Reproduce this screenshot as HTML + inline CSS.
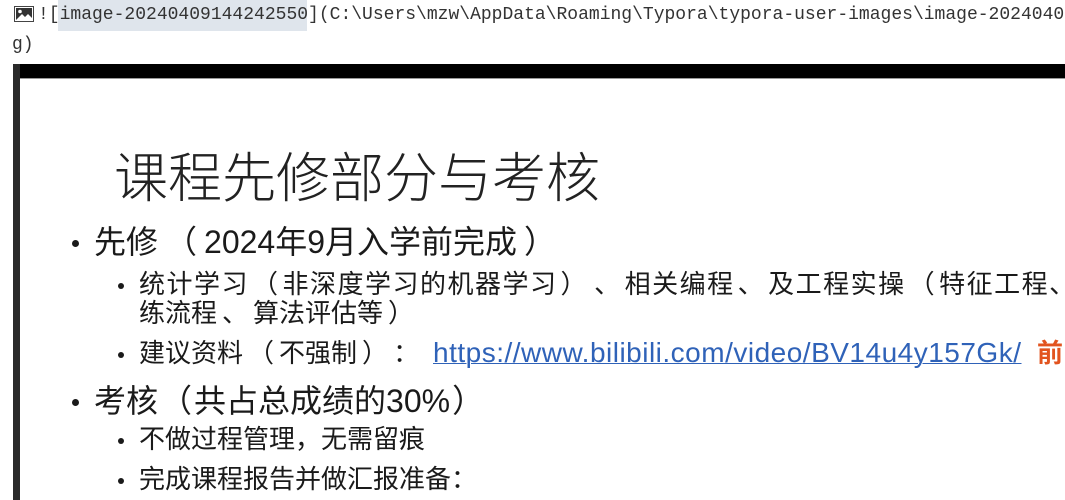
<!DOCTYPE html>
<html><head><meta charset="utf-8"><style>
html,body{margin:0;padding:0;width:1065px;height:500px;overflow:hidden;background:#fff;position:relative}
*{text-spacing-trim:space-all}
.mono{font-family:"Liberation Mono","DejaVu Sans Mono",monospace;font-size:18px;color:#333;position:absolute;white-space:nowrap;line-height:22px}
.s{position:absolute;white-space:nowrap;font-family:"Liberation Sans","Noto Sans CJK SC",sans-serif;color:#1a1a1a;line-height:1}
.b{position:absolute;width:7px;height:7px;border-radius:50%;background:#1a1a1a}
.b2{width:6px;height:6px}
.p{display:inline-block;margin:0 7px}
.r{display:inline-block;margin:0 3px}
.q{display:inline-block;margin:0 5px}
</style></head><body>
<div style="position:absolute;left:58px;top:0;width:249px;height:31px;background:#dfe5ec"></div>
<svg style="position:absolute;left:14px;top:6px" width="20" height="16" viewBox="0 0 20 16"><rect x="0.5" y="0.5" width="19" height="15" fill="#fff" stroke="#444"/><rect x="2" y="2" width="16" height="12" fill="#333"/><circle cx="6" cy="5.5" r="1.8" fill="#fff"/><path d="M2 14 L8 8 L11 11 L14 8 L18 12 L18 14Z" fill="#fff"/></svg>
<div class="mono" style="left:38px;top:4px">![image-20240409144242550](C:\Users\mzw\AppData\Roaming\Typora\typora-user-images\image-2024040</div>
<div class="mono" style="left:12px;top:34px">g)</div>
<div style="position:absolute;left:13px;top:64px;width:1052px;height:14px;background:#000"></div>
<div style="position:absolute;left:20px;top:78px;width:1045px;height:1px;background:#999"></div>
<div style="position:absolute;left:13px;top:64px;width:7px;height:436px;background:#2a2a2a"></div>

<div class="s" style="left:114px;top:152px;font-size:54px;font-weight:300;color:#222">课程先修部分与考核</div>

<div class="b" style="left:72px;top:240px"></div>
<div class="s" style="left:94px;top:226px;font-size:32px">先修<span class="p">（</span>2024年9月入学前完成<span class="p">）</span></div>
<div class="b b2" style="left:118px;top:283px"></div>
<div class="s" style="left:139px;top:271px;font-size:26px;letter-spacing:1.5px">统计学习<span class="r">（</span>非深度学习的机器学习<span class="r">）</span><span class="r">、</span>相关编程<span class="r">、</span>及工程实操<span class="r">（</span>特征工程、</div>
<div class="s" style="left:139px;top:300px;font-size:26px">练流程<span class="q">、</span>算法评估等<span class="q">）</span></div>
<div class="b b2" style="left:118px;top:352px"></div>
<div class="s" style="left:139px;top:340px;font-size:26px">建议资料<span class="q">（</span>不强制<span class="q">）</span>：<span style="position:absolute;left:294px;top:-1px;font-size:28px;letter-spacing:0.5px;color:#2f62b8;text-decoration:underline;text-decoration-thickness:1px">https://www.bilibili.com/video/BV14u4y157Gk/</span><span style="position:absolute;left:898px;color:#e2541f;font-weight:bold">前</span></div>

<div class="b" style="left:72px;top:399px"></div>
<div class="s" style="left:94px;top:385px;font-size:32px">考核<span class="q" style="margin:0 2px">（</span>共占总成绩的30%<span class="q" style="margin:0 2px">）</span></div>
<div class="b b2" style="left:118px;top:438px"></div>
<div class="s" style="left:139px;top:426px;font-size:26px">不做过程管理，无需留痕</div>
<div class="b b2" style="left:118px;top:478px"></div>
<div class="s" style="left:139px;top:466px;font-size:26px">完成课程报告并做汇报准备：</div>
</body></html>
